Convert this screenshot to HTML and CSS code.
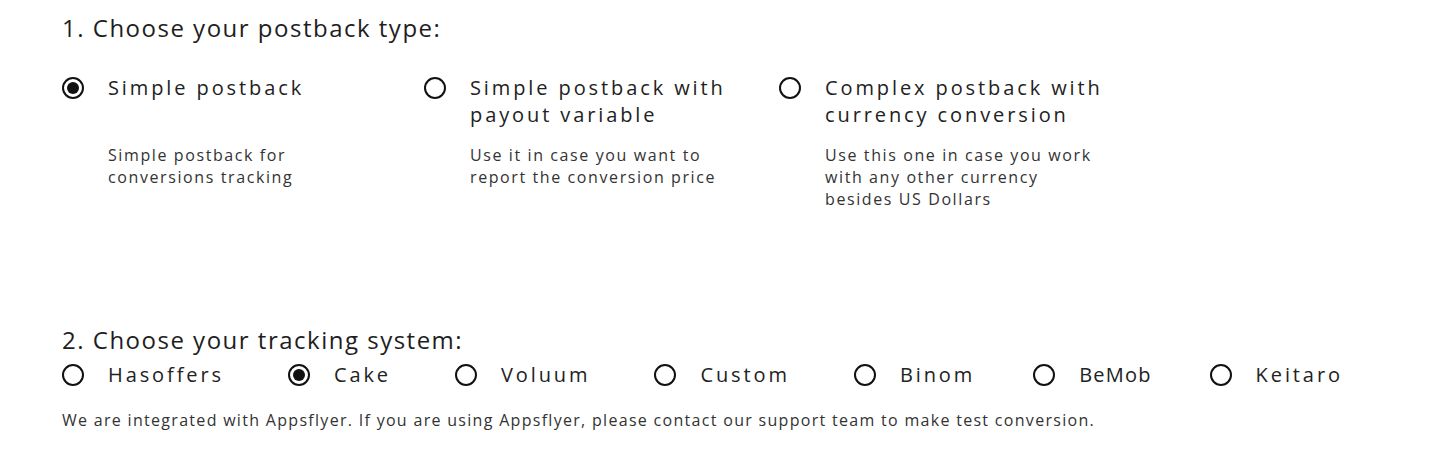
FILE: index.html
```html
<!DOCTYPE html>
<html>
  <head>
    <meta charset="utf-8" />
    <title>Postback settings</title>
    <link rel="stylesheet" href="styles.css">
  </head>
  <body>
    <div class="page">
      <h2 class="stepTitle">1. Choose your postback type:</h2>
      <div class="postbackTypes">
        <label class="postbackType">
          <div class="option">
            <span class="radio checked"></span>
            <span class="optionLabel">Simple postback</span>
          </div>
          <p class="hint">Simple postback for<br>conversions tracking</p>
        </label>
        <label class="postbackType">
          <div class="option">
            <span class="radio"></span>
            <span class="optionLabel">Simple postback with<br>payout variable</span>
          </div>
          <p class="hint">Use it in case you want to<br>report the conversion price</p>
        </label>
        <label class="postbackType">
          <div class="option">
            <span class="radio"></span>
            <span class="optionLabel">Complex postback with<br>currency conversion</span>
          </div>
          <p class="hint">Use this one in case you work<br>with any other currency<br>besides US Dollars</p>
        </label>
      </div>

      <h2 class="stepTitle second">2. Choose your tracking system:</h2>
      <div class="trackers">
        <label class="option tracker"><span class="radio"></span><span class="optionLabel">Hasoffers</span></label>
        <label class="option tracker"><span class="radio checked"></span><span class="optionLabel">Cake</span></label>
        <label class="option tracker"><span class="radio"></span><span class="optionLabel">Voluum</span></label>
        <label class="option tracker"><span class="radio"></span><span class="optionLabel">Custom</span></label>
        <label class="option tracker"><span class="radio"></span><span class="optionLabel">Binom</span></label>
        <label class="option tracker"><span class="radio"></span><span class="optionLabel">BeMob</span></label>
        <label class="option tracker"><span class="radio"></span><span class="optionLabel">Keitaro</span></label>
      </div>
      <p class="note">We are integrated with Appsflyer. If you are using Appsflyer, please contact our support team to make test conversion.</p>
    </div>
  </body>
</html>
```

FILE: styles.css
```css
html {
  background-color: white;
  color: #1e1e1e;
  font-family: "Open Sans", sans-serif;
}
body {
  margin: 0;
}

.page {
  padding: 12px 0 0 62px;
}

.stepTitle {
  font-size: 24px;
  font-weight: 400;
  line-height: 32px;
  letter-spacing: 1.5px;
  margin: 0;
}

.stepTitle.second {
  margin-top: 114px;
}

.postbackTypes {
  display: flex;
  margin-top: 30px;
}

.postbackType {
  display: block;
  width: 362px;
}

.postbackType:nth-child(2) {
  width: 355px;
}

.option {
  display: flex;
  align-items: flex-start;
}

.postbackType .option {
  min-height: 54px;
}

.radio {
  box-sizing: border-box;
  width: 22px;
  height: 22px;
  border: 2px solid #111;
  border-radius: 50%;
  flex-shrink: 0;
  margin-top: 3px;
  margin-right: 24px;
  display: flex;
  align-items: center;
  justify-content: center;
}

.radio.checked:after {
  content: '';
  width: 12px;
  height: 12px;
  border-radius: 50%;
  background: #111;
}

.optionLabel {
  font-size: 20px;
  line-height: 27px;
  letter-spacing: 2.9px;
  color: #222;
}

.hint {
  margin: 16px 0 0 46px;
  font-size: 16px;
  line-height: 22px;
  letter-spacing: 1.6px;
  color: #333;
}

.trackers {
  display: flex;
  margin-top: 5px;
}

.tracker {
  margin-right: 64px;
}

.tracker:nth-child(5),
.tracker:nth-child(6) {
  margin-right: 58px;
  letter-spacing: 0;
}

.tracker:nth-child(6) .optionLabel {
  letter-spacing: 1.2px;
}

.note {
  margin: 21px 0 0;
  font-size: 16px;
  line-height: 22px;
  letter-spacing: 1.3px;
  color: #333;
}
```
